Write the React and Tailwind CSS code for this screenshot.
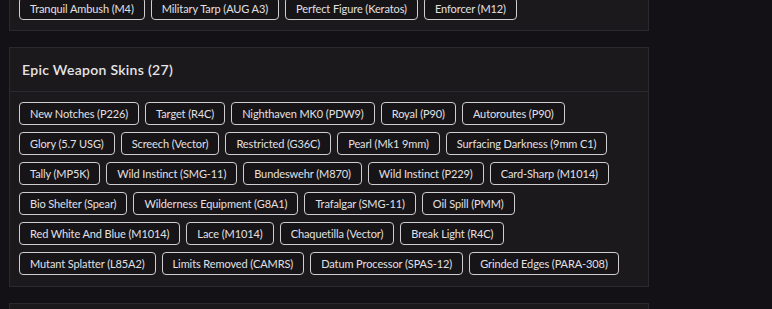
import React from "react";

const topSkins = ["Tranquil Ambush (M4)", "Military Tarp (AUG A3)", "Perfect Figure (Keratos)", "Enforcer (M12)"];

const epicSkins = [
  "New Notches (P226)",
  "Target (R4C)",
  "Nighthaven MK0 (PDW9)",
  "Royal (P90)",
  "Autoroutes (P90)",
  "Glory (5.7 USG)",
  "Screech (Vector)",
  "Restricted (G36C)",
  "Pearl (Mk1 9mm)",
  "Surfacing Darkness (9mm C1)",
  "Tally (MP5K)",
  "Wild Instinct (SMG-11)",
  "Bundeswehr (M870)",
  "Wild Instinct (P229)",
  "Card-Sharp (M1014)",
  "Bio Shelter (Spear)",
  "Wilderness Equipment (G8A1)",
  "Trafalgar (SMG-11)",
  "Oil Spill (PMM)",
  "Red White And Blue (M1014)",
  "Lace (M1014)",
  "Chaquetilla (Vector)",
  "Break Light (R4C)",
  "Mutant Splatter (L85A2)",
  "Limits Removed (CAMRS)",
  "Datum Processor (SPAS-12)",
  "Grinded Edges (PARA-308)",
];

const Chip = ({ label }) => (
  <span className="h-[23px] px-[10px] flex items-center rounded-[4px] border border-[#cfcdd0] bg-[#161417] text-[11px] tracking-[-0.1px] text-[#e2e0e3] whitespace-nowrap leading-none">
    {label}
  </span>
);

const ChipList = ({ items }) => (
  <div className="flex flex-wrap gap-x-[6px] gap-y-[7px]">
    {items.map((s) => (
      <Chip key={s} label={s} />
    ))}
  </div>
);

export default function App() {
  return (
    <div
      className="min-h-screen bg-[#131115] overflow-hidden"
      style={{ fontFamily: "Lato, 'Liberation Sans', sans-serif" }}
    >
      <div className="w-[640px] ml-[9px] -mt-[14px] flex flex-col gap-[16px]">
        <section className="bg-[#1b191c] border border-[#2b292d] px-[9px] pt-[10px] pb-[10px]">
          <ChipList items={topSkins} />
        </section>

        <section className="bg-[#1b191c] border border-[#2b292d]">
          <div className="h-[44px] px-[12px] flex items-center border-b border-[#2b292d]">
            <h2 className="text-[14px] font-semibold text-[#e6e4e7] tracking-[0.3px]">Epic Weapon Skins (27)</h2>
          </div>
          <div className="px-[9px] pt-[10px] pb-[11px]">
            <ChipList items={epicSkins} />
          </div>
        </section>

        <section className="bg-[#1b191c] border border-[#2b292d] h-[60px]" />
      </div>
    </div>
  );
}
